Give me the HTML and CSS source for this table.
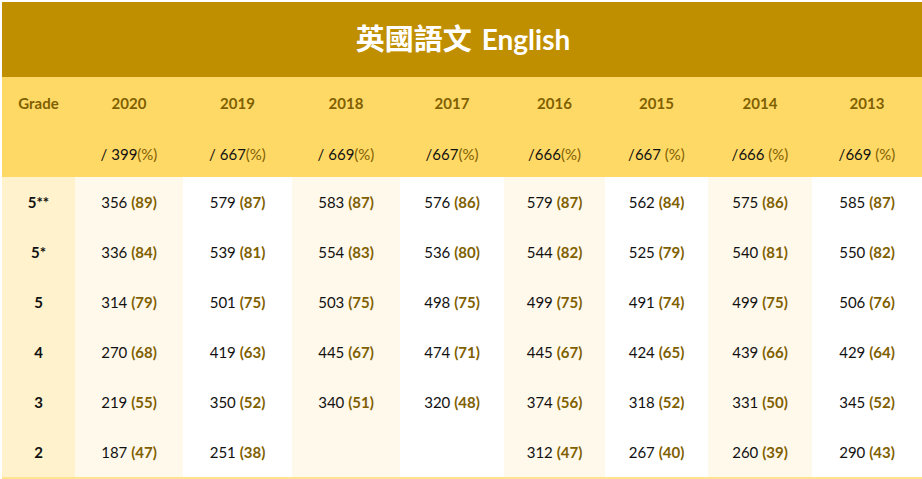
FILE: index.html
```html
<!DOCTYPE html>
<html lang="zh-Hant">
<head>
<meta charset="utf-8">
<title>英國語文 English</title>
<link rel="stylesheet" href="styles.css">
</head>
<body>
<table class="results">
  <colgroup>
    <col class="c-grade">
    <col class="c-2020">
    <col class="c-2019">
    <col class="c-2018">
    <col class="c-2017">
    <col class="c-2016">
    <col class="c-2015">
    <col class="c-2014">
    <col class="c-2013">
  </colgroup>
  <thead>
    <tr class="title-row">
      <th colspan="9"><span class="zh">英國語文</span><span class="en">English</span></th>
    </tr>
    <tr class="head-row">
      <th>Grade</th>
      <th>2020</th><th>2019</th><th>2018</th><th>2017</th><th>2016</th><th>2015</th><th>2014</th><th>2013</th>
    </tr>
    <tr class="sub-row">
      <th></th>
      <th>/ 399<span class="pc">(%)</span></th>
      <th>/ 667<span class="pc">(%)</span></th>
      <th>/ 669<span class="pc">(%)</span></th>
      <th>/667<span class="pc">(%)</span></th>
      <th>/666<span class="pc">(%)</span></th>
      <th>/667 <span class="pc">(%)</span></th>
      <th>/666 <span class="pc">(%)</span></th>
      <th>/669 <span class="pc">(%)</span></th>
    </tr>
  </thead>
  <tbody>
    <tr>
      <th>5**</th>
      <td class="alt">356 <b>(89)</b></td><td>579 <b>(87)</b></td><td class="alt">583 <b>(87)</b></td><td>576 <b>(86)</b></td>
      <td class="alt">579 <b>(87)</b></td><td>562 <b>(84)</b></td><td class="alt">575 <b>(86)</b></td><td>585 <b>(87)</b></td>
    </tr>
    <tr>
      <th>5*</th>
      <td class="alt">336 <b>(84)</b></td><td>539 <b>(81)</b></td><td class="alt">554 <b>(83)</b></td><td>536 <b>(80)</b></td>
      <td class="alt">544 <b>(82)</b></td><td>525 <b>(79)</b></td><td class="alt">540 <b>(81)</b></td><td>550 <b>(82)</b></td>
    </tr>
    <tr>
      <th>5</th>
      <td class="alt">314 <b>(79)</b></td><td>501 <b>(75)</b></td><td class="alt">503 <b>(75)</b></td><td>498 <b>(75)</b></td>
      <td class="alt">499 <b>(75)</b></td><td>491 <b>(74)</b></td><td class="alt">499 <b>(75)</b></td><td>506 <b>(76)</b></td>
    </tr>
    <tr>
      <th>4</th>
      <td class="alt">270 <b>(68)</b></td><td>419 <b>(63)</b></td><td class="alt">445 <b>(67)</b></td><td>474 <b>(71)</b></td>
      <td class="alt">445 <b>(67)</b></td><td>424 <b>(65)</b></td><td class="alt">439 <b>(66)</b></td><td>429 <b>(64)</b></td>
    </tr>
    <tr>
      <th>3</th>
      <td class="alt">219 <b>(55)</b></td><td>350 <b>(52)</b></td><td class="alt">340 <b>(51)</b></td><td>320 <b>(48)</b></td>
      <td class="alt">374 <b>(56)</b></td><td>318 <b>(52)</b></td><td class="alt">331 <b>(50)</b></td><td>345 <b>(52)</b></td>
    </tr>
    <tr>
      <th>2</th>
      <td class="alt">187 <b>(47)</b></td><td>251 <b>(38)</b></td><td class="alt"></td><td></td>
      <td class="alt">312 <b>(47)</b></td><td>267 <b>(40)</b></td><td class="alt">260 <b>(39)</b></td><td>290 <b>(43)</b></td>
    </tr>
  </tbody>
</table>
</body>
</html>
```

FILE: styles.css
```css
html, body {
  margin: 0;
  padding: 0;
  background: #ffffff;
}

body {
  padding: 2px 0 0 2px;
  font-family: "Lato", "Noto Sans CJK TC", sans-serif;
  font-size: 15px;
  color: #111111;
  overflow: hidden;
}

.results {
  border-collapse: collapse;
  table-layout: fixed;
  width: 920px;
  border-bottom: 2px solid #ffe38f;
}

.c-grade { width: 73px; }
.c-2020 { width: 108px; }
.c-2019 { width: 109px; }
.c-2018 { width: 108px; }
.c-2017 { width: 104px; }
.c-2016 { width: 101px; }
.c-2015 { width: 103px; }
.c-2014 { width: 104px; }
.c-2013 { width: 110px; }

.results th,
.results td {
  padding: 0;
  text-align: center;
  vertical-align: middle;
  height: 50px;
  line-height: 20px;
  white-space: nowrap;
}

.title-row th {
  height: 73px;
  padding-top: 2px;
  padding-left: 2px;
  background: #bf8f00;
  color: #ffffff;
  font-weight: 700;
  line-height: 36px;
}

.title-row .zh {
  font-family: "Noto Sans CJK TC", sans-serif;
  font-size: 29px;
  font-weight: 700;
  margin-right: 10px;
}

.title-row .en {
  font-family: "Lato", sans-serif;
  font-size: 28px;
  font-weight: 700;
}

.head-row th {
  height: 49px;
  padding-top: 1px;
  background: #ffd966;
  color: #7f6000;
  font-weight: 700;
}

.sub-row th {
  height: 46px;
  padding-top: 4px;
  background: #ffd966;
  color: #111111;
  font-weight: 400;
}

.sub-row .pc {
  color: #7f6000;
}

tbody th {
  background: #fff2cc;
  font-weight: 700;
  color: #111111;
}

tbody td {
  background: #ffffff;
}

tbody td.alt {
  background: #fff9ec;
}

tbody td b {
  color: #7f6000;
  font-weight: 700;
}
```
